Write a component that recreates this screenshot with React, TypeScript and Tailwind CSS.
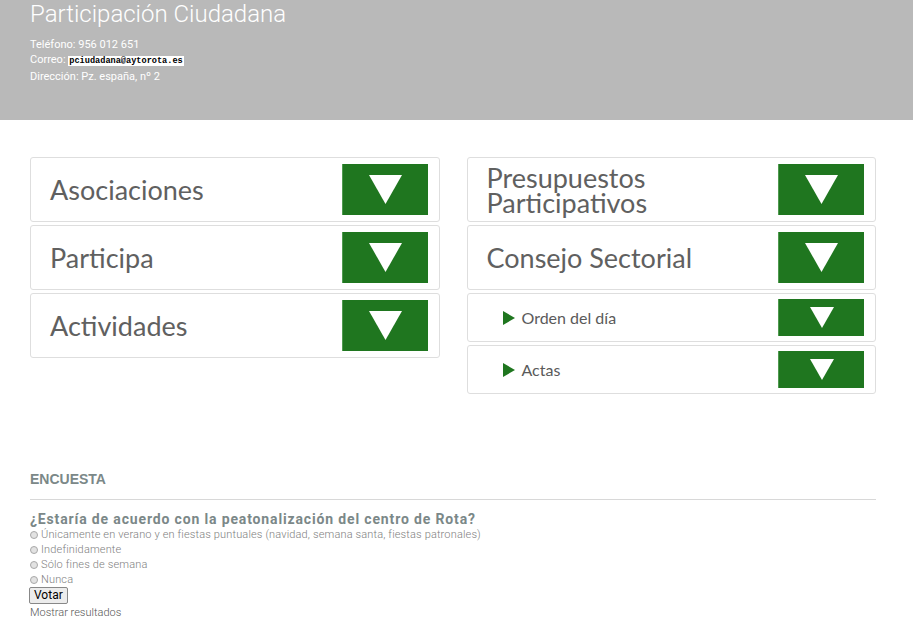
import React from 'react';

const Arrow = ({ small = false }: { small?: boolean }) => (
  <div
    className={`flex items-center justify-center w-[86px] bg-[#1f761f] border-l border-[#4f9a4f] ${
      small ? 'h-[37px]' : 'h-[51px]'
    }`}
  >
    {small ? (
      <svg width="24" height="21" viewBox="0 0 24 21">
        <polygon points="0,0 24,0 12,21" fill="#fff" />
      </svg>
    ) : (
      <svg width="33" height="29" viewBox="0 0 33 29">
        <polygon points="0,0 33,0 16.5,29" fill="#fff" />
      </svg>
    )}
  </div>
);

const Card = ({ label }: { label: React.ReactNode }) => (
  <div className="flex items-center justify-between border border-[#dedede] rounded-[3px] bg-white pl-[19px] pr-[11px] py-[6px]">
    <span className="text-[27px] leading-[25px] text-[#606060] font-['Lato',sans-serif]">{label}</span>
    <Arrow />
  </div>
);

const SubCard = ({ label }: { label: string }) => (
  <div className="flex items-center justify-between border border-[#dedede] rounded-[3px] bg-white pl-[35px] pr-[11px] py-[5px]">
    <span className="flex items-center gap-[7px] text-[16px] text-[#5a5a5a] font-['Lato',sans-serif]">
      <svg width="12" height="14" viewBox="0 0 12 14">
        <polygon points="0,0 12,7 0,14" fill="#1f761f" />
      </svg>
      {label}
    </span>
    <Arrow small />
  </div>
);

const options = [
  'Únicamente en verano y en fiestas puntuales (navidad, semana santa, fiestas patronales)',
  'Indefinidamente',
  'Sólo fines de semana',
  'Nunca',
];

export default function App() {
  return (
    <div className="w-[913px] min-h-[628px] bg-white font-['Roboto',sans-serif]">
      {/* cabecera */}
      <header className="h-[121px] bg-[#b9b9b9] px-[30px] text-white">
        <h1 className="text-[24px] font-light leading-[30px] -mt-[1px]">Participación Ciudadana</h1>
        <div className="mt-[8px] text-[11px] leading-[15px]">
          <p>Teléfono: 956 012 651</p>
          <p>
            Correo:{' '}
            <span className="bg-white text-black font-bold font-['Liberation_Mono',monospace] text-[8.6px] px-[1px]">
              pciudadana@aytorota.es
            </span>
          </p>
          <p>Dirección: Pz. españa, nº 2</p>
        </div>
      </header>

      <main className="px-[30px] pt-[37px] w-[906px]">
        <div className="grid grid-cols-2 gap-x-[27px]">
          <div className="flex flex-col gap-[3px]">
            <Card label="Asociaciones" />
            <Card label="Participa" />
            <Card label="Actividades" />
          </div>
          <div className="flex flex-col gap-[3px]">
            <Card
              label={
                <>
                  Presupuestos
                  <br />
                  Participativos
                </>
              }
            />
            <Card label="Consejo Sectorial" />
            <SubCard label="Orden del día" />
            <SubCard label="Actas" />
          </div>
        </div>

        {/* encuesta */}
        <section className="mt-[75px]">
          <h2 className="text-[14px] font-bold text-[#7b8888] leading-[20px] font-['Liberation_Sans',sans-serif]">
            ENCUESTA
          </h2>
          <hr className="mt-[10px] border-t border-[#d8d8d8]" />
          <p className="mt-[11px] text-[14px] font-bold tracking-[0.85px] text-[#7b8888] leading-[16px]">
            ¿Estaría de acuerdo con la peatonalización del centro de Rota?
          </p>
          <ul className="text-[11px] font-light tracking-[0.15px] text-[#808080] leading-[15px]">
            {options.map((o) => (
              <li key={o} className="flex items-center gap-[3px]">
                <span className="inline-block w-[8px] h-[8px] rounded-full border border-[#a8a8a8] bg-[#e2e2e2]" />
                {o}
              </li>
            ))}
          </ul>
          <button className="block -ml-[1px] border border-[#888] rounded-[2px] bg-[#ececec] px-[4px] text-[12px] leading-[15px] text-black">
            Votar
          </button>
          <p className="mt-[1px] text-[11px] font-light text-[#555] leading-[15px]">Mostrar resultados</p>
        </section>
      </main>
    </div>
  );
}
